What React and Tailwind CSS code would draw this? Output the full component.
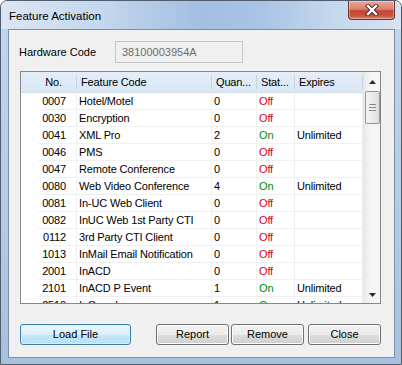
import React from 'react';

const features = [
  { no: '0007', name: 'Hotel/Motel', qty: '0', on: false },
  { no: '0030', name: 'Encryption', qty: '0', on: false },
  { no: '0041', name: 'XML Pro', qty: '2', on: true, exp: 'Unlimited' },
  { no: '0046', name: 'PMS', qty: '0', on: false },
  { no: '0047', name: 'Remote Conference', qty: '0', on: false },
  { no: '0080', name: 'Web Video Conference', qty: '4', on: true, exp: 'Unlimited' },
  { no: '0081', name: 'In-UC Web Client', qty: '0', on: false },
  { no: '0082', name: 'InUC Web 1st Party CTI', qty: '0', on: false },
  { no: '0112', name: '3rd Party CTI Client', qty: '0', on: false },
  { no: '1013', name: 'InMail Email Notification', qty: '0', on: false },
  { no: '2001', name: 'InACD', qty: '0', on: false },
  { no: '2101', name: 'InACD P Event', qty: '1', on: true, exp: 'Unlimited' },
  { no: '2510', name: 'InGuard', qty: '1', on: true, exp: 'Unlimited' },
];

const grayBtn =
  'h-[21px] w-[73px] rounded-[3px] border border-[#707070] bg-[linear-gradient(to_bottom,#f2f2f2_0%,#ebebeb_50%,#dddddd_51%,#cfcfcf_100%)] shadow-[inset_0_0_0_1px_#fcfcfc] text-[11px] text-black';

function CloseButton() {
  return (
    <div className="w-[47px] h-[19px] rounded-b-[4px] border border-t-0 border-[#6b342c] bg-[linear-gradient(to_bottom,#e9a797_0%,#d8826f_45%,#c4432f_55%,#c9523d_80%,#d7806d_100%)] shadow-[inset_0_0_0_1px_rgba(255,255,255,0.35)] flex items-center justify-center">
      <svg width="14" height="12" viewBox="0 0 14 12">
        <path d="M3 2 L11 10 M11 2 L3 10" stroke="#4a2320" strokeWidth="4.2" strokeLinecap="square" />
        <path d="M3 2 L11 10 M11 2 L3 10" stroke="#ffffff" strokeWidth="2.4" strokeLinecap="square" />
      </svg>
    </div>
  );
}

function HeaderCell({ w, children, right }) {
  return (
    <div className={`${w} h-full flex items-center relative ${right ? 'justify-end pr-[15px]' : 'pl-[4px]'}`}>
      <span>{children}</span>
      <span className="absolute right-0 top-[3px] bottom-[3px] w-px bg-[#c9d3de]" />
    </div>
  );
}

function Scrollbar() {
  return (
    <div className="w-[17px] h-full flex flex-col bg-[linear-gradient(to_right,#e9e9e9,#f5f5f5_40%,#f5f5f5)] border-l border-[#e6e6e6]">
      <div className="h-[17px] flex items-center justify-center pt-[2px]">
        <svg width="7" height="4" viewBox="0 0 7 4"><path d="M0 4 L3.5 0 L7 4 Z" fill="#2c2c2c" /></svg>
      </div>
      <div className="mt-[2px] ml-px w-[15px] h-[33px] rounded-[2px] border border-[#959595] bg-[linear-gradient(to_right,#f4f4f4,#e9e9e9_60%,#dcdcdc)] flex flex-col items-center justify-center gap-[2px]">
        <span className="w-[7px] h-px bg-[#8a8a8a]" />
        <span className="w-[7px] h-px bg-[#8a8a8a]" />
        <span className="w-[7px] h-px bg-[#8a8a8a]" />
      </div>
      <div className="flex-1" />
      <div className="h-[17px] flex items-center justify-center">
        <svg width="7" height="4" viewBox="0 0 7 4"><path d="M0 0 L7 0 L3.5 4 Z" fill="#2c2c2c" /></svg>
      </div>
    </div>
  );
}

export default function App() {
  return (
    <div className="w-[402px] h-[365px] font-['Liberation_Sans',Arial,sans-serif] text-[11px] text-black">
      <div className="w-full h-full flex flex-col border border-[#4f5d6e] rounded-t-[7px] overflow-hidden bg-[linear-gradient(to_bottom,#c3d6ec,#b3cbe6_60%,#a6c0df)] pl-[7px] pr-[6px] pb-[6px]">
        {/* Title bar */}
        <div className="h-[28px] -ml-[7px] -mr-[6px] pl-[8px] pr-[6px] flex items-start justify-between bg-[linear-gradient(to_right,#dbe6f3_0%,#c4d7ed_25%,#a2bfe1_50%,#a9c4e4_65%,#c7d9ee_85%,#d6e3f2_100%)]">
          <span className="mt-[8px] text-[11.5px] leading-[14px] text-black">Feature Activation</span>
          <CloseButton />
        </div>

        {/* Client area */}
        <div className="flex-1 border border-[#7d8fa5] bg-[#f0f0f0] flex flex-col">
          <div className="mt-[11px] pl-[10px] flex items-center">
            <span className="w-[96px]">Hardware Code</span>
            <div className="w-[128px] h-[22px] border border-[#c4c6ca] bg-[#f0f0f0] flex items-center pl-[6px] text-[#6d6d6d]">
              38100003954A
            </div>
          </div>

          {/* List view */}
          <div className="mt-[8px] ml-[11px] w-[361px] h-[233px] border border-[#828790] bg-white flex overflow-hidden tracking-[-0.15px]">
            <div className="w-[342px] h-full overflow-hidden flex flex-col">
              <div className="h-[21px] flex shrink-0 bg-[linear-gradient(to_bottom,#e4eef9,#d9e7f5)] border-b border-[#d3dde8]">
                <HeaderCell w="w-[56px]" right>No.</HeaderCell>
                <HeaderCell w="w-[135px]">Feature Code</HeaderCell>
                <HeaderCell w="w-[45px]">Quan...</HeaderCell>
                <HeaderCell w="w-[38px]">Stat...</HeaderCell>
                <HeaderCell w="w-[68px]">Expires</HeaderCell>
              </div>
              {features.map((f) => (
                <div key={f.no} className="h-[17px] flex shrink-0">
                  <div className="w-[56px] h-full relative flex items-center justify-end pr-[10px] border-r border-[#f0f0f0] after:absolute after:left-[17px] after:right-0 after:bottom-0 after:h-px after:bg-[#f0f0f0]">
                    {f.no}
                  </div>
                  <div className="w-[135px] h-full flex items-center pl-[2px] border-r border-b border-[#f0f0f0] whitespace-nowrap">
                    {f.name}
                  </div>
                  <div className="w-[45px] h-full flex items-center pl-[2px] border-r border-b border-[#f0f0f0]">
                    {f.qty}
                  </div>
                  <div className={`w-[38px] h-full flex items-center pl-[2px] border-r border-b border-[#f0f0f0] ${f.on ? 'text-[#008c00]' : 'text-[#e0001b]'}`}>
                    {f.on ? 'On' : 'Off'}
                  </div>
                  <div className="w-[68px] h-full flex items-center pl-[2px] border-r border-b border-[#f0f0f0]">
                    {f.exp || ''}
                  </div>
                </div>
              ))}
            </div>
            <Scrollbar />
          </div>

          {/* Buttons */}
          <div className="mt-[20px] ml-[11px] flex items-center">
            <button className="h-[21px] w-[111px] rounded-[3px] border border-[#3c7fb1] bg-[linear-gradient(to_bottom,#eaf6fd_0%,#dcf0fb_50%,#c8e7f8_51%,#b9dff4_100%)] shadow-[inset_0_0_0_1px_#d4effc] text-[11px] text-black">
              Load File
            </button>
            <button className={`${grayBtn} ml-[25px]`}>Report</button>
            <button className={`${grayBtn} ml-[2px]`}>Remove</button>
            <button className={`${grayBtn} ml-[4px]`}>Close</button>
          </div>
        </div>
      </div>
    </div>
  );
}
